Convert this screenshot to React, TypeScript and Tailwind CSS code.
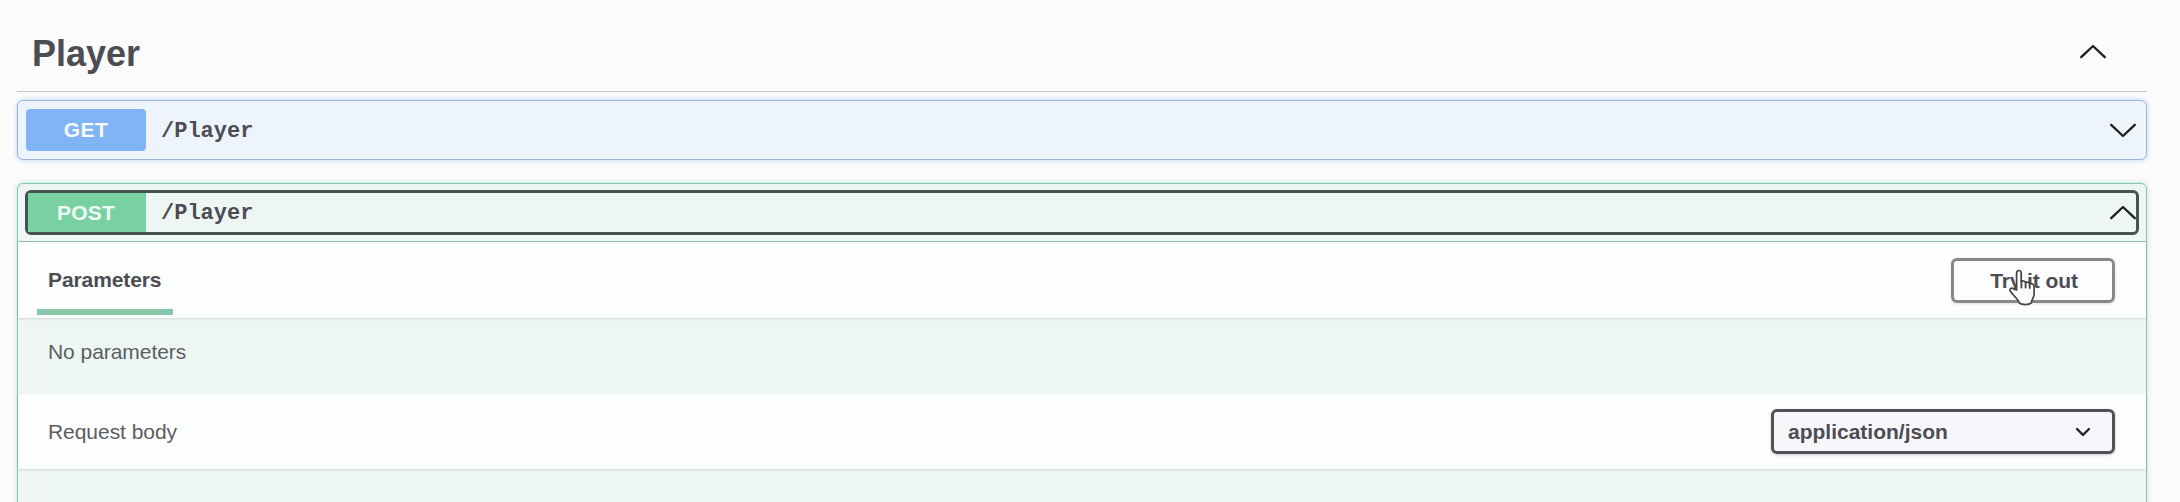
type ChevronProps = { up?: boolean; className?: string };

function Chevron({ up = false, className = '' }: ChevronProps) {
  return (
    <svg
      className={`h-[15px] w-[28px] shrink-0 ${className}`}
      viewBox="0 0 28 15"
      fill="none"
      stroke="#1f1f23"
      strokeWidth="2.3"
      strokeLinecap="round"
      strokeLinejoin="round"
    >
      <path d={up ? 'M2.2 13.2L14 2L25.8 13.2' : 'M2.2 1.8L14 13L25.8 1.8'} />
    </svg>
  );
}

function HandCursor() {
  return (
    <svg className="absolute top-[8px] left-[54px] h-[37px] w-[28px]" viewBox="0 0 28 37">
      <path
        d="M8.6 21V4.2c0-3.6 4.6-3.6 4.6 0v8.4c1.7-1.2 3.8-.6 4.2.9 1.7-.9 3.6-.3 4 1.3 2.2-.7 4.7.5 4.7 2.9V25c0 3.600-2.200 5.300-2.900 9-2.700 2.100-9.200 2.100-11.900 0-.9-4-5.600-6.900-8.800-11.400-1.700-2.900 1.200-4.300 3.200-2.700z"
        fill="#fcfcfd"
        stroke="#444448"
        strokeWidth="1.7"
        strokeLinejoin="round"
      />
      <path d="M13.4 12v6.5M17.6 13v5.5M21.7 14.5v4.5" stroke="#444448" strokeWidth="1.8" strokeLinecap="round" />
    </svg>
  );
}

export default function App() {
  return (
    <div className="h-[502px] w-full overflow-hidden bg-[#fbfbfc] pr-[33px] pl-[17px] font-['Liberation_Sans',Arial,sans-serif] text-[21px] text-[#4c4c52]">
      <header className="flex h-[92px] items-center justify-between border-b border-[#c8c4ca] pt-[16px] pr-[40px] pl-[15px]">
        <h2 className="text-[36px] leading-[42px] font-bold">Player</h2>
        <Chevron up className="mb-[4px]" />
      </header>

      <section className="mt-[8px] flex h-[60px] items-center rounded-[6px] border border-[#9db5d6] bg-[#eef4fc] pr-[9px] pl-[8px] shadow-[0_0_5px_#b3d0fa]">
        <span className="flex h-[42px] w-[120px] items-center justify-center rounded-[4px] bg-[#80b4f5] font-bold tracking-[0.4px] text-[#f6fbff]">
          GET
        </span>
        <span className="ml-[15px] flex-1 pt-[2px] font-['Liberation_Mono',monospace] text-[22px] font-bold">/Player</span>
        <Chevron />
      </section>

      <section className="mt-[23px] h-[340px] rounded-t-[6px] border border-[#8ac4ab] bg-[#eef6f4] shadow-[0_0_5px_#b0e8d0]">
        <div className="h-[58px] border-b border-[#8fc4ae] px-[7px] pt-[6px]">
          <div className="flex h-[45px] items-center rounded-[6px] border-[3px] border-[#455252]">
            <span className="flex h-full w-[118px] items-center justify-center bg-[#79d0a2] pr-[2px] font-bold tracking-[0.2px] text-[#effff8]">
              POST
            </span>
            <span className="ml-[15px] flex-1 pt-[2px] font-['Liberation_Mono',monospace] text-[22px] font-bold">/Player</span>
            <Chevron up className="-mr-px" />
          </div>
        </div>

        <div className="flex h-[76px] items-start justify-between bg-[#fcfefd] pr-[31px] pl-[19px] shadow-[0_1px_2px_rgba(0,0,0,0.12)]">
          <div className="flex h-[73px] w-[136px] flex-col justify-between border-b-[6px] border-[#88c7aa] pt-[26px] pl-[11px] font-bold tracking-[-0.1px]">
            <span className="leading-[24px]">Parameters</span>
          </div>
          <button className="relative mt-[16px] flex h-[45px] w-[164px] items-center justify-center rounded-[6px] border-[3px] border-[#88888b] bg-[#fcfdfe] pl-[2px] font-bold tracking-[-0.1px] shadow-[0_1px_3px_rgba(0,0,0,0.12)]">
            Try it out
            <HandCursor />
          </button>
        </div>

        <div className="h-[76px] pt-[22px] pl-[30px] leading-[24px] tracking-[-0.05px] text-[#59605f]">No parameters</div>

        <div className="flex h-[75px] items-center justify-between bg-[#fcfefd] pr-[31px] pl-[30px] shadow-[0_1px_2px_rgba(0,0,0,0.12)]">
          <span className="tracking-[-0.05px] text-[#5c5c61]">Request body</span>
          <div className="flex h-[45px] w-[344px] items-center justify-between rounded-[6px] border-[3px] border-[#515157] bg-[#f7f7fb] pr-[21px] pl-[14px] font-bold shadow-[0_1px_3px_rgba(0,0,0,0.2)]">
            application/json
            <svg
              className="h-[10px] w-[16px]"
              viewBox="0 0 16 10"
              fill="none"
              stroke="#252529"
              strokeWidth="2.4"
              strokeLinecap="round"
              strokeLinejoin="round"
            >
              <path d="M2 2L8 7.8L14 2" />
            </svg>
          </div>
        </div>
      </section>
    </div>
  );
}
